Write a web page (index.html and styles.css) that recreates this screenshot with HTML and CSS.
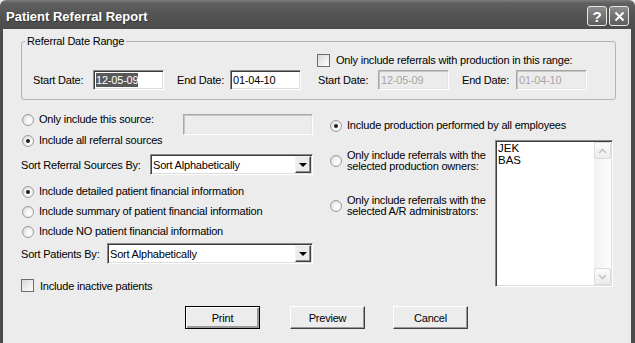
FILE: index.html
```html
<!DOCTYPE html>
<html lang="en">
<head>
    <meta charset="UTF-8">
    <title>Patient Referral Report</title>
    <link rel="stylesheet" href="styles.css">
</head>
<body>
    <div class="window">
        <div class="titlebar">
            <span class="title">Patient Referral Report</span>
            <div class="caption-buttons">
                <span class="cap-btn help">?</span>
                <span class="cap-btn">
                    <svg width="11" height="11" viewBox="0 0 11 11"><path d="M1.5 1.5 L9.5 9.5 M9.5 1.5 L1.5 9.5" stroke="#fff" stroke-width="2" fill="none"/></svg>
                </span>
            </div>
        </div>

        <div class="client">
            <fieldset class="group">
                <legend>Referral Date Range</legend>
                <div class="date-cols">
                    <div class="date-left">
                        <div class="date-row">
                            <span class="lbl start">Start Date:</span>
                            <span class="field date"><span class="sel">12-05-09</span></span>
                            <span class="lbl end">End Date:</span>
                            <span class="field date">01-04-10</span>
                        </div>
                    </div>
                    <div class="date-right">
                        <div class="check-line"><span class="checkbox"></span>Only include referrals with production in this range:</div>
                        <div class="date-row">
                            <span class="lbl start">Start Date:</span>
                            <span class="field date disabled">12-05-09</span>
                            <span class="lbl end2">End Date:</span>
                            <span class="field date disabled">01-04-10</span>
                        </div>
                    </div>
                </div>
            </fieldset>

            <div class="options">
                <div class="opt-left">
                    <div class="src-grid">
                        <div class="radio-item"><span class="radio"></span>Only include this source:</div>
                        <span class="field disabled src-field"></span>
                        <div class="radio-item"><span class="radio on"></span>Include all referral sources</div>
                    </div>

                    <div class="select-row first">
                        <span class="select-lbl">Sort Referral Sources By:</span>
                        <div class="select wide">Sort Alphabetically<span class="drop"><span class="tri"></span></span></div>
                    </div>

                    <div class="radio-item gap-lg"><span class="radio on"></span>Include detailed patient financial information</div>
                    <div class="radio-item gap-sm"><span class="radio"></span>Include summary of patient financial information</div>
                    <div class="radio-item gap-sm"><span class="radio"></span>Include NO patient financial information</div>

                    <div class="select-row second">
                        <span class="select-lbl short">Sort Patients By:</span>
                        <div class="select wider">Sort Alphabetically<span class="drop"><span class="tri"></span></span></div>
                    </div>

                    <div class="check-line inactive"><span class="checkbox"></span>Include inactive patients</div>
                </div>

                <div class="opt-right">
                    <div class="radio-item top"><span class="radio on"></span>Include production performed by all employees</div>
                    <div class="owner-area">
                        <div class="owner-opts">
                            <div class="radio-item two"><span class="radio"></span><span>Only include referrals with the<br>selected production owners:</span></div>
                            <div class="radio-item two"><span class="radio"></span><span>Only include referrals with the<br>selected A/R administrators:</span></div>
                        </div>
                        <div class="listbox">
                            <div class="list-items">
                                <div>JEK</div>
                                <div>BAS</div>
                            </div>
                            <div class="scrollbar">
                                <span class="sb-btn"><svg width="9" height="6" viewBox="0 0 9 6"><path d="M1 5 L4.5 1.5 L8 5" stroke="#c2c2c2" stroke-width="1.6" fill="none"/></svg></span>
                                <span class="sb-btn"><svg width="9" height="6" viewBox="0 0 9 6"><path d="M1 1 L4.5 4.5 L8 1" stroke="#c2c2c2" stroke-width="1.6" fill="none"/></svg></span>
                            </div>
                        </div>
                    </div>
                </div>
            </div>

            <div class="buttons">
                <span class="btn default">Print</span>
                <span class="btn preview">Preview</span>
                <span class="btn cancel">Cancel</span>
            </div>
        </div>
    </div>
</body>
</html>
```

FILE: styles.css
```css
html {
    background-color: #fff;
}

body {
    margin: 0;
    padding: 0;
    font-family: "Liberation Sans", Arial, sans-serif;
    font-size: 11px;
    letter-spacing: -0.2px;
    color: #000;
}

.window {
    width: 635px;
    height: 343px;
    overflow: hidden;
    background-color: #ececec;
}

/* title bar */
.titlebar {
    height: 29px;
    box-sizing: border-box;
    padding: 3px 6px 0 6px;
    display: flex;
    align-items: center;
    justify-content: space-between;
    border-radius: 6px 6px 0 0;
    background: linear-gradient(#7c7c7c 0, #606060 3px, #545454 50%, #4c4c4c 100%);
}

.title {
    font-weight: bold;
    font-size: 13px;
    letter-spacing: 0;
    color: #fff;
    text-shadow: 1px 1px 0 #333;
}

.caption-buttons {
    display: flex;
    gap: 2px;
}

.cap-btn {
    width: 20px;
    height: 20px;
    box-sizing: border-box;
    border: 1px solid #e6e6e6;
    border-radius: 3px;
    background: linear-gradient(#8c8c8c, #5c5c5c);
    display: flex;
    align-items: center;
    justify-content: center;
}

.cap-btn.help {
    font-weight: bold;
    font-size: 15px;
    letter-spacing: 0;
    color: #fff;
}

/* client area */
.client {
    height: 314px;
    box-sizing: border-box;
    border-left: 3px solid #4c4c4c;
    border-right: 4px solid #4c4c4c;
    padding: 6px 15px 0 18px;
}

.group {
    margin: 0;
    padding: 0 0 9px 0;
    width: 595px;
    min-width: 0;
    box-sizing: border-box;
    border: 1px solid #b4b4b4;
    border-radius: 3px;
}

.group legend {
    margin-left: 3px;
    padding: 0 2px;
    line-height: 13px;
}

.date-cols {
    display: flex;
    align-items: flex-end;
    padding: 5px 0 0 11px;
}

.date-left {
    width: 284px;
}

.check-line {
    display: flex;
    align-items: center;
    height: 14px;
    margin-bottom: 3px;
    white-space: nowrap;
}

.checkbox {
    width: 13px;
    height: 13px;
    box-sizing: border-box;
    border: 1px solid #6c6c6c;
    background: linear-gradient(135deg, #d8d8d8, #fff);
    margin-right: 6px;
    flex: none;
}

.date-row {
    display: flex;
    align-items: center;
    height: 20px;
    white-space: nowrap;
}

.lbl.start { width: 60px; }
.lbl.end { width: 53px; margin-left: 13px; }
.lbl.end2 { width: 54px; margin-left: 13px; }
.date-right .lbl.start { margin-left: 1px; }

.field {
    box-sizing: border-box;
    height: 20px;
    border: 1px solid;
    border-color: #8a8a8a #fff #fff #8a8a8a;
    box-shadow: inset 1px 1px 0 #3c3c3c, inset -1px -1px 0 #dcdcdc;
    background-color: #fff;
    padding: 1px 2px;
    line-height: 16px;
}

.field.date {
    width: 71px;
}

.field.disabled {
    background-color: #ececec;
    color: #a6a6a6;
    border-color: #a8a8a8 #fff #fff #a8a8a8;
    box-shadow: inset 1px 1px 0 #c4c4c4, inset -1px -1px 0 #e4e4e4;
}

.sel {
    background-color: #595959;
    color: #fff;
    padding: 1px 0;
}

/* options */
.options {
    display: flex;
    gap: 16px;
    margin-top: 13px;
}

.opt-left {
    width: 292px;
    display: flex;
    flex-direction: column;
}

.src-grid {
    display: grid;
    grid-template-columns: 162px 130px;
    grid-template-rows: 13px 13px;
    row-gap: 8px;
}

.src-field {
    grid-column: 2;
    grid-row: 1 / 3;
    height: 21px;
    margin-top: 1px;
}

.radio-item {
    display: flex;
    align-items: center;
    height: 13px;
    line-height: 13px;
    white-space: nowrap;
}

.radio {
    position: relative;
    flex: none;
    width: 12px;
    height: 12px;
    box-sizing: border-box;
    border-radius: 50%;
    border: 1px solid #9c9c9c;
    background: radial-gradient(circle at 65% 65%, #fff 0, #f2f2f2 45%, #cdcdcd 100%);
    margin: 0 5px 0 1px;
}

.radio.on::after {
    content: "";
    position: absolute;
    left: 3px;
    top: 3px;
    width: 4px;
    height: 4px;
    border-radius: 50%;
    background-color: #1e1e1e;
}

.gap-lg { margin-top: 10px; }
.gap-sm { margin-top: 7px; }

.select-row {
    display: flex;
    align-items: center;
    height: 21px;
    white-space: nowrap;
}

.select-row.first { margin-top: 7px; }
.select-row.second { margin-top: 5px; }

.select-lbl { width: 129px; }
.select-lbl.short { width: 86px; }

.select {
    height: 21px;
    box-sizing: border-box;
    display: flex;
    align-items: center;
    justify-content: space-between;
    padding: 0 1px 0 2px;
    border: 1px solid;
    border-color: #8a8a8a #fff #fff #8a8a8a;
    box-shadow: inset 1px 1px 0 #3c3c3c, inset -1px -1px 0 #dcdcdc;
    background-color: #fff;
}

.select.wide { width: 163px; }
.select.wider { width: 206px; }

.drop {
    width: 16px;
    height: 17px;
    box-sizing: border-box;
    border: 1px solid;
    border-color: #f4f4f4 #404040 #404040 #f4f4f4;
    box-shadow: inset -1px -1px 0 #8a8a8a;
    background-color: #ececec;
    display: flex;
    align-items: center;
    justify-content: center;
}

.tri {
    width: 0;
    height: 0;
    border-left: 4px solid transparent;
    border-right: 4px solid transparent;
    border-top: 4px solid #000;
    margin-top: 1px;
}

.check-line.inactive {
    margin-top: 15px;
    height: 13px;
}

.opt-right {
    width: 284px;
}

.radio-item.top {
    margin-top: 6px;
}

.owner-area {
    display: flex;
    margin-top: 8px;
}

.owner-opts {
    width: 166px;
    padding-top: 10px;
    display: flex;
    flex-direction: column;
    gap: 23px;
}

.radio-item.two {
    height: auto;
    line-height: 11px;
}

.listbox {
    width: 118px;
    height: 147px;
    box-sizing: border-box;
    display: flex;
    border: 1px solid;
    border-color: #8a8a8a #fff #fff #8a8a8a;
    box-shadow: inset 1px 1px 0 #3c3c3c, inset -1px -1px 0 #dcdcdc;
    background-color: #fff;
}

.list-items {
    flex: 1;
    padding: 1px 2px;
    font-size: 11.5px;
    letter-spacing: 0;
    line-height: 12px;
}

.scrollbar {
    width: 17px;
    margin: 1px 1px 1px 0;
    display: flex;
    flex-direction: column;
    justify-content: space-between;
    background: linear-gradient(90deg, #f1f1f1, #fdfdfd);
}

.sb-btn {
    height: 17px;
    box-sizing: border-box;
    border: 1px solid #dcdcdc;
    border-radius: 2px;
    background: linear-gradient(#fbfbfb, #ececec);
    display: flex;
    align-items: center;
    justify-content: center;
}

/* buttons */
.buttons {
    display: flex;
    margin-top: 11px;
    padding-left: 164px;
}

.btn {
    width: 75px;
    height: 23px;
    box-sizing: border-box;
    display: flex;
    align-items: center;
    justify-content: center;
    background-color: #ececec;
    border: 1px solid;
    border-color: #fff #404040 #404040 #fff;
    box-shadow: inset -1px -1px 0 #999;
}

.btn.default {
    border: 1px solid #000;
    box-shadow: inset 1px 1px 0 #fff, inset -2px -2px 0 #999;
}

.btn.preview { margin-left: 30px; }
.btn.cancel { margin-left: 28px; }
```
